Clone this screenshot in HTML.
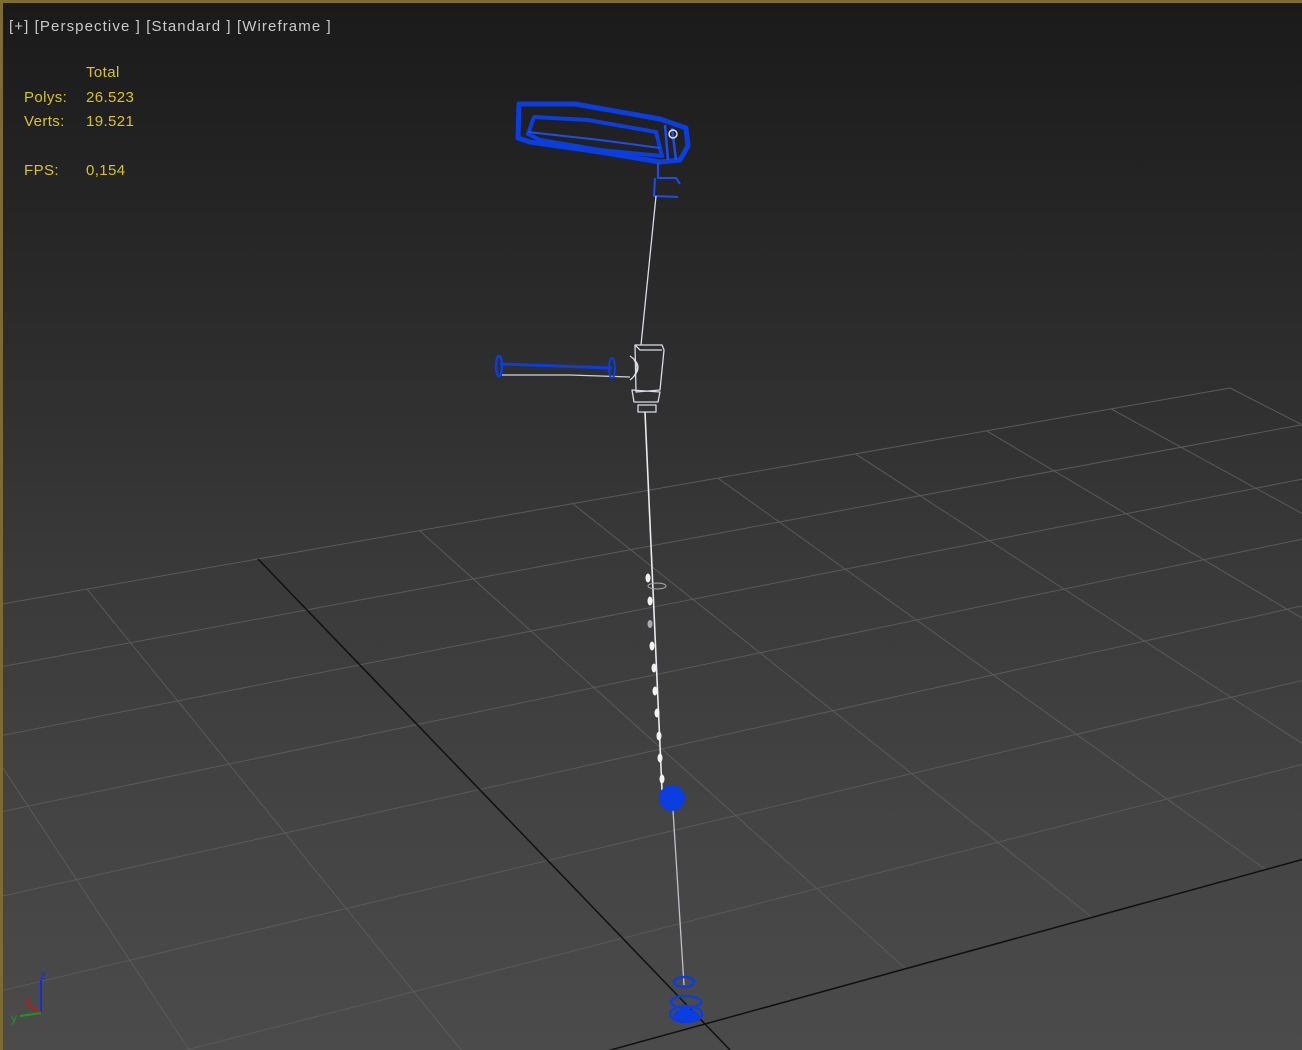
<!DOCTYPE html>
<html><head><meta charset="utf-8"><style>
html,body{margin:0;padding:0;width:1302px;height:1050px;overflow:hidden;}
body{position:relative;
background:linear-gradient(to bottom,#1a1a1a 0px,#2a2a2a 300px,#393939 560px,#434343 800px,#4b4b4b 1050px);
font-family:"Liberation Sans",sans-serif;}
#bt{position:absolute;left:0;top:0;width:1302px;height:3px;background:#7d6c32;}
#bl{position:absolute;left:0;top:0;width:3px;height:1050px;background:#7d6c32;}
.t{position:absolute;font-size:15px;white-space:pre;}
.h{color:#c9c9c9;left:9px;top:18px;letter-spacing:1.1px;}
.y{color:#d7c324;letter-spacing:0.4px;}
svg{position:absolute;left:0;top:0;display:block;}
</style></head><body>
<svg id="g" width="1302" height="1050"></svg>
<svg width="1302" height="1050">
<g fill="none" stroke-linejoin="round">
<path d="M519 104 L575 104 L660 119 L686 128 L688 146 L680 160 L660 162 L600 152 L530 142 L518 138 Z" stroke="#0a3ee0" stroke-width="5"/>
<path d="M534 117 L588 120 L656 132 L662 156 L600 150 L540 140 L528 134 Z" stroke="#0a3ee0" stroke-width="4"/>
<path d="M528 132 L600 140 L660 148" stroke="#1c4df0" stroke-width="2"/>
<path d="M665 125 L668 160 M672 128 L676 160" stroke="#1c4df0" stroke-width="2.5"/>
<circle cx="673" cy="134" r="4" stroke="#e0e0e0" stroke-width="1.5"/>
<path d="M658 163 L658 178 L676 178 L680 184 M655 178 L654 196 L678 197" stroke="#1c4df0" stroke-width="2"/>
<path d="M656 196 L641 345" stroke="#d8dbe8" stroke-width="1.3"/>
<path d="M635 345 L662 345 L664 350 L660 390 L636 392 Z M635 345 L640 350 L662 350" stroke="#d8dbe8" stroke-width="1.3"/>
<path d="M632 390 L660 392 L658 402 L634 402 Z M638 405 L656 405 L656 412 L638 412 Z" stroke="#d8dbe8" stroke-width="1.3"/>
<path d="M630 356 Q646 367 630 380 M634 360 Q640 367 634 376" stroke="#d8dbe8" stroke-width="1.3"/>
<path d="M500 364 L612 368" stroke="#0a3ee0" stroke-width="3"/>
<path d="M502 375 L570 375 L630 377" stroke="#cfd2e0" stroke-width="1.3"/>
<ellipse cx="499" cy="366" rx="3" ry="10" stroke="#0a3ee0" stroke-width="2.5"/>
<ellipse cx="612" cy="368" rx="3" ry="10" stroke="#0a3ee0" stroke-width="2"/>
<path d="M645 412 L662 790" stroke="#e8eaf2" stroke-width="1.6"/>
<path d="M673 810 L684 985" stroke="#bfc2cc" stroke-width="1.3"/>
<ellipse cx="657" cy="586" rx="9" ry="3" stroke="#aaa" stroke-width="1"/>
</g>
<g fill="#f2f2f2">
<ellipse cx="648" cy="578" rx="2.5" ry="4.5"/><ellipse cx="650" cy="601" rx="2.5" ry="4.5"/>
<ellipse cx="650" cy="624" rx="2.5" ry="4" fill="#aaa"/><ellipse cx="652" cy="646" rx="2.5" ry="4.5"/>
<ellipse cx="654" cy="668" rx="2.5" ry="4.5"/><ellipse cx="655" cy="691" rx="2.5" ry="4.5"/>
<ellipse cx="657" cy="713" rx="2.5" ry="4.5"/><ellipse cx="659" cy="736" rx="2.5" ry="4.5"/>
<ellipse cx="660" cy="758" rx="2.5" ry="4.5"/><ellipse cx="662" cy="779" rx="2.5" ry="4.5"/>
</g>
<ellipse cx="672" cy="798" rx="13" ry="13" fill="#0a3ee0"/>
<g fill="none" stroke="#0a3ee0" stroke-width="2.5">
<ellipse cx="684" cy="982" rx="10" ry="5"/>
<ellipse cx="686" cy="1002" rx="15" ry="6"/>
<ellipse cx="686" cy="1014" rx="16" ry="8"/>
</g>
<ellipse cx="686" cy="1016" rx="13" ry="7" fill="#0a3ee0"/>
<g stroke-width="2" fill="none">
<path d="M41 1013 L41 980" stroke="#1a2ed0"/>
<path d="M41 1013 L28 1005" stroke="#c01818"/>
<path d="M41 1013 L20 1016" stroke="#1a9a1a"/>
</g>
<text x="40" y="979" fill="#1a2ed0" font-size="12" font-family="Liberation Sans">z</text>
<text x="24" y="1004" fill="#c01818" font-size="12" font-family="Liberation Sans">x</text>
<text x="11" y="1022" fill="#1a9a1a" font-size="12" font-family="Liberation Sans">y</text>
</svg>
<div id="bt"></div><div id="bl"></div>
<div class="t h">[+] [Perspective ] [Standard ] [Wireframe ]</div>
<div class="t y" style="left:86px;top:64px">Total</div>
<div class="t y" style="left:24px;top:89px">Polys:</div>
<div class="t y" style="left:86px;top:89px">26.523</div>
<div class="t y" style="left:24px;top:113px">Verts:</div>
<div class="t y" style="left:86px;top:113px">19.521</div>
<div class="t y" style="left:24px;top:162px">FPS:</div>
<div class="t y" style="left:86px;top:162px">0,154</div>
<script>
(function(){
var src=[[0,0],[7,0],[7,7],[0,7]],dst=[[705,1024],[258,559],[1230,388],[1856,707]];
var A=[],b=[];
for(var i=0;i<4;i++){var x=src[i][0],y=src[i][1],X=dst[i][0],Y=dst[i][1];
A.push([x,y,1,0,0,0,-X*x,-X*y]);b.push(X);
A.push([0,0,0,x,y,1,-Y*x,-Y*y]);b.push(Y);}
var n=8;for(var c=0;c<n;c++){var p=c;for(var r=c+1;r<n;r++)if(Math.abs(A[r][c])>Math.abs(A[p][c]))p=r;
var t=A[c];A[c]=A[p];A[p]=t;t=b[c];b[c]=b[p];b[p]=t;
for(var r=0;r<n;r++){if(r==c)continue;var f=A[r][c]/A[c][c];for(var k=c;k<n;k++)A[r][k]-=f*A[c][k];b[r]-=f*b[c];}}
var h=[];for(var i=0;i<n;i++)h.push(b[i]/A[i][i]);
function P(u,v){var w=h[6]*u+h[7]*v+1;return[(h[0]*u+h[1]*v+h[2])/w,(h[3]*u+h[4]*v+h[5])/w];}
var s='';
function L(a,c,col,wd){s+='<line x1="'+a[0].toFixed(1)+'" y1="'+a[1].toFixed(1)+'" x2="'+c[0].toFixed(1)+'" y2="'+c[1].toFixed(1)+'" stroke="'+col+'" stroke-width="'+wd+'"/>';}
var gc='#5a5a5a';
for(var u=0;u<=7;u++){L(P(u,-8),P(u,7),gc,1);}
for(var v=-8;v<=7;v++){if(v==0)continue;L(P(0,v),P(7,v),gc,1);}
L(P(0,0),P(7,0),'#101010',1.5);
L(P(-0.6,0),P(0,0),'#101010',1.5);
L(P(0,-2),P(0,8),'#101010',1.5);
document.getElementById('g').innerHTML=s;
})();
</script>
</body></html>
